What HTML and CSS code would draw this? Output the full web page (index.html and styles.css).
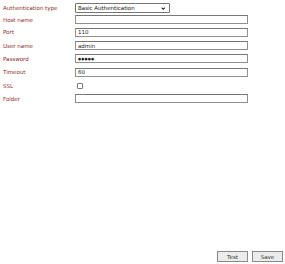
FILE: index.html
```html
<!DOCTYPE html>
<html>
<head>
<meta charset="utf-8">
<link rel="stylesheet" href="styles.css">
</head>
<body>
<div class="page">
  <div class="form">
    <div class="row"><label class="lbl">Authentication type</label>
      <div class="select"><span>Basic Authentication</span><svg class="chev" viewBox="0 0 8 5" width="4.5" height="3"><path d="M1 1 L4 4 L7 1" fill="none" stroke="#222" stroke-width="1.8"/></svg></div></div>
    <div class="row"><label class="lbl">Host name</label><div class="input"></div></div>
    <div class="row"><label class="lbl">Port</label><div class="input">110</div></div>
    <div class="row"><label class="lbl">User name</label><div class="input">admin</div></div>
    <div class="row"><label class="lbl">Password</label><div class="input pw">●●●●●</div></div>
    <div class="row"><label class="lbl">Timeout</label><div class="input">60</div></div>
    <div class="row"><label class="lbl">SSL</label><div class="check"></div></div>
    <div class="row"><label class="lbl">Folder</label><div class="input"></div></div>
  </div>
  <div class="buttons">
    <div class="btn">Test</div>
    <div class="btn">Save</div>
  </div>
</div>
</body>
</html>
```
FILE: styles.css
```css
html, body { margin: 0; padding: 0; background: #fff; }
body { width: 285px; height: 264px; font-family: "DejaVu Sans", Verdana, sans-serif; font-size: 5.5px; }
.page { display: flex; flex-direction: column; height: 264px; box-sizing: border-box; padding: 2px 2px 2px 3px; }
.form { display: grid; grid-template-columns: 72px 173px; grid-template-rows: 12px 11px 14px 13px 13px 14px 14px 11px; }
.row { display: contents; }
.lbl { color: #8b2a2a; display: flex; align-items: center; }
.row .input, .row .select, .row .check { align-self: center; }
.select { width: 95px; height: 10px; box-sizing: border-box; border: 1px solid #767676; border-radius: 1px; display: flex; align-items: center; justify-content: space-between; padding: 0 4px 0 2px; color: #111; background: #fff; }
.input { height: 9px; box-sizing: border-box; border: 1px solid #8f8f8f; border-top-color: #777; padding: 0 2px; color: #222; display: flex; align-items: center; width: 173px; }
.pw { font-size: 3.5px; letter-spacing: 0.2px; }
.check { width: 6px; height: 6px; border: 1px solid #777; border-radius: 1px; margin-left: 2px; box-sizing: border-box; }
.buttons { margin-top: auto; display: flex; justify-content: flex-end; gap: 4px; }
.btn { width: 31px; height: 11px; box-sizing: border-box; border: 1px solid #8a8a8a; background: #ececec; color: #333; display: flex; align-items: center; justify-content: center; }
```
